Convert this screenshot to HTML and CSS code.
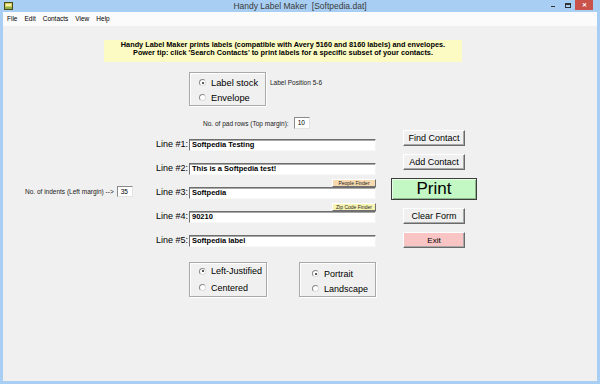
FILE: index.html
```html
<!doctype html>
<html lang="en">
<head>
    <meta charset="utf-8">
    <title>Handy Label Maker [Softpedia.dat]</title>
    <link rel="stylesheet" href="styles.css">
</head>
<body>
  <div class="window">

    <!-- title bar -->
    <div class="titlebar">
      <div class="tb-side">
        <svg class="app-icon" width="9" height="8" viewBox="0 0 9 8">
          <rect x="0.5" y="0.5" width="8" height="7" fill="#d6cf63" stroke="#4d4a1c"/>
          <rect x="2" y="2" width="5" height="2" fill="#f6f1a6"/>
          <rect x="1" y="5" width="7" height="2" fill="#8fb04a"/>
        </svg>
      </div>
      <div class="title">Handy Label Maker&nbsp; [Softpedia.dat]</div>
      <div class="tb-side tb-controls">
        <span class="ctl-min"></span>
        <span class="ctl-max"></span>
        <span class="ctl-close">&#x2715;</span>
      </div>
    </div>

    <div class="frame">
      <ul class="menubar">
        <li>File</li>
        <li>Edit</li>
        <li>Contacts</li>
        <li>View</li>
        <li>Help</li>
      </ul>

      <div class="client">

        <div class="banner">
          Handy Label Maker prints labels (compatible with Avery 5160 and 8160 labels) and envelopes.<br>
          Power tip: click 'Search Contacts' to print labels for a specific subset of your contacts.
        </div>

        <div class="stock-row">
          <div class="group group-stock">
            <label class="radio checked"><span class="dot"></span>Label stock</label>
            <label class="radio"><span class="dot"></span>Envelope</label>
          </div>
          <span class="small-text stock-note">Label Position 5-6</span>
        </div>

        <div class="form-area">

          <div class="indents">
            <span class="small-text">No. of indents (Left margin) --&gt;</span>
            <span class="num-box">35</span>
          </div>

          <div class="lines">
            <div class="pad-row">
              <span class="small-text">No. of pad rows (Top margin):</span>
              <span class="num-box">10</span>
            </div>

            <div class="line">
              <span class="line-label">Line #1:</span>
              <span class="field">Softpedia Testing</span>
            </div>
            <div class="line">
              <span class="line-label">Line #2:</span>
              <span class="field">This is a Softpedia test!</span>
            </div>
            <div class="line">
              <button type="button" class="finder finder-people">People Finder</button>
              <span class="line-label">Line #3:</span>
              <span class="field">Softpedia</span>
            </div>
            <div class="line">
              <button type="button" class="finder finder-zip">Zip Code Finder</button>
              <span class="line-label">Line #4:</span>
              <span class="field">90210</span>
            </div>
            <div class="line">
              <span class="line-label">Line #5:</span>
              <span class="field">Softpedia label</span>
            </div>
          </div>

          <div class="buttons">
            <button type="button" class="win-button">Find Contact</button>
            <button type="button" class="win-button">Add Contact</button>
            <button type="button" class="win-button print-button">Print</button>
            <button type="button" class="win-button">Clear Form</button>
            <button type="button" class="win-button exit-button">Exit</button>
          </div>

        </div>

        <div class="bottom-row">
          <div class="group group-justify">
            <label class="radio checked"><span class="dot"></span>Left-Justified</label>
            <label class="radio"><span class="dot"></span>Centered</label>
          </div>
          <div class="group group-orient">
            <label class="radio checked"><span class="dot"></span>Portrait</label>
            <label class="radio"><span class="dot"></span>Landscape</label>
          </div>
        </div>

      </div>
    </div>
  </div>
</body>
</html>
```

FILE: styles.css
```css
html, body {
  margin: 0;
  padding: 0;
}

body {
  font-family: 'Liberation Sans', Arial, sans-serif;
  color: #000;
}

.window {
  width: 600px;
  height: 384px;
  background-color: #a8cff3;
  display: flex;
  flex-direction: column;
}

/* title bar */
.titlebar {
  height: 12px;
  display: flex;
  align-items: flex-start;
}

.tb-side {
  width: 50px;
  height: 12px;
  display: flex;
}

.app-icon {
  margin: 2px 0 0 4px;
}

.title {
  flex: 1;
  text-align: center;
  font-size: 8.5px;
  line-height: 12px;
  color: #3a3a3a;
}

.tb-controls {
  justify-content: flex-end;
  align-items: flex-start;
  padding-right: 7px;
  box-sizing: border-box;
}

.ctl-min {
  width: 4px;
  height: 1px;
  margin: 6px 10px 0 0;
  background-color: #333;
}

.ctl-max {
  width: 4px;
  height: 2px;
  margin: 3px 4px 0 0;
  border: 1px solid #333;
  border-top-width: 2px;
}

.ctl-close {
  width: 18px;
  height: 10px;
  background-color: #c9524b;
  color: #fff;
  font-size: 6px;
  line-height: 10px;
  text-align: center;
  font-weight: bold;
}

.frame {
  flex: 1;
  display: flex;
  flex-direction: column;
  padding: 0 3px 3px 3px;
}

/* menu */
.menubar {
  list-style: none;
  margin: 0;
  padding: 0 0 0 4px;
  height: 14px;
  background-color: #fbfbfb;
  display: flex;
  gap: 7px;
  font-size: 6.5px;
  line-height: 14px;
}

.client {
  flex: 1;
  background-color: #f0f0f0;
  padding-top: 14px;
}

.banner {
  margin-left: 101px;
  width: 358px;
  height: 22px;
  box-sizing: border-box;
  padding-top: 1px;
  background-color: #fcfbc4;
  font-size: 7.3px;
  font-weight: bold;
  line-height: 8px;
  text-align: center;
  white-space: nowrap;
}

.small-text {
  font-size: 6.5px;
  color: #222;
  white-space: nowrap;
}

/* group boxes and radios */
.group {
  border: 1px solid #a9a9a9;
  box-shadow: inset 1px 1px #fff, 1px 1px #fff;
  box-sizing: border-box;
  display: flex;
  flex-direction: column;
}

.radio {
  display: flex;
  align-items: center;
  height: 16px;
  font-size: 9px;
  white-space: nowrap;
}

.dot {
  width: 5px;
  height: 5px;
  border: 1px solid;
  border-color: #8a8a8a #dcdcdc #dcdcdc #8a8a8a;
  border-radius: 50%;
  background-color: #fff;
  margin-right: 5px;
  display: flex;
  align-items: center;
  justify-content: center;
}

.checked .dot::after {
  content: "";
  width: 2px;
  height: 2px;
  border-radius: 50%;
  background-color: #222;
}

.stock-row {
  margin: 10px 0 0 186px;
  display: flex;
  align-items: flex-start;
}

.group-stock {
  width: 77px;
  height: 34px;
  padding: 2px 0 0 9px;
}

.group-stock .radio {
  font-size: 9.3px;
}

.stock-note {
  margin: 7px 0 0 4px;
}

/* main form */
.form-area {
  margin-top: 11px;
  display: flex;
  align-items: flex-start;
}

.indents {
  width: 150px;
  box-sizing: border-box;
  padding-left: 22px;
  margin-top: 69px;
  display: flex;
  align-items: center;
  gap: 3px;
}

.num-box {
  width: 16px;
  height: 11px;
  box-sizing: border-box;
  background-color: #fff;
  border: 1px solid;
  border-color: #8a8a8a #e4e4e4 #e4e4e4 #8a8a8a;
  font-size: 6.5px;
  line-height: 9px;
  padding-left: 3px;
}

.pad-row .num-box {
  height: 12px;
  line-height: 10px;
}

.lines {
  width: 223px;
}

.pad-row {
  height: 12px;
  margin-bottom: -2px;
  padding-left: 50px;
  display: flex;
  align-items: center;
  gap: 5px;
}

.line {
  display: grid;
  grid-template-columns: 35px 187px;
  grid-template-rows: 12px 12px;
  column-gap: 1px;
}

.line-label {
  grid-row: 2;
  grid-column: 1;
  font-size: 9px;
  line-height: 11px;
  text-align: right;
  white-space: nowrap;
}

.field {
  grid-row: 2;
  grid-column: 2;
  background-color: #fff;
  border: 1px solid;
  border-color: #6e6e6e #f4f4f4 #f8f8f8 #6e6e6e;
  box-shadow: inset 0 1px #a8a8a8;
  font-size: 7.5px;
  font-weight: bold;
  line-height: 10px;
  padding-left: 2px;
  white-space: nowrap;
}

.finder {
  grid-row: 1;
  grid-column: 2;
  justify-self: end;
  align-self: end;
  width: 44px;
  height: 8px;
  padding: 0;
  border: 1px solid;
  border-color: #fff #707070 #707070 #fff;
  font-family: 'Liberation Sans', Arial, sans-serif;
  font-size: 5px;
  line-height: 6px;
  color: #222;
}

.finder-people {
  background-color: #f6d9ae;
}

.finder-zip {
  background-color: #f7f3b2;
}

/* right buttons */
.buttons {
  margin: 13px 0 0 15px;
  width: 86px;
  display: flex;
  flex-direction: column;
  align-items: center;
  gap: 8px;
}

.win-button {
  width: 62px;
  height: 16px;
  padding: 0;
  background-color: #f0f0f0;
  border: 1px solid;
  border-color: #fff #6a6a6a #6a6a6a #fff;
  box-shadow: inset -1px -1px #a8a8a8;
  font-family: 'Liberation Sans', Arial, sans-serif;
  font-size: 9px;
  color: #000;
  cursor: pointer;
}

.print-button {
  width: 86px;
  height: 22px;
  background-color: #c3f7c3;
  border-color: #3c3c3c;
  box-shadow: inset 1px 1px #e6ffe6, inset -1px -1px #8cb88c;
  font-size: 17px;
  line-height: 20px;
}

.exit-button {
  background-color: #f8c4c4;
  font-size: 8px;
}

/* bottom radios */
.bottom-row {
  margin: 14px 0 0 186px;
  display: flex;
  gap: 32px;
}

.group-justify {
  width: 78px;
  height: 35px;
  padding: 0 0 0 9px;
}

.group-justify .radio {
  height: 18px;
}

.group-orient {
  width: 77px;
  height: 35px;
  padding: 3px 0 0 12px;
}
```
